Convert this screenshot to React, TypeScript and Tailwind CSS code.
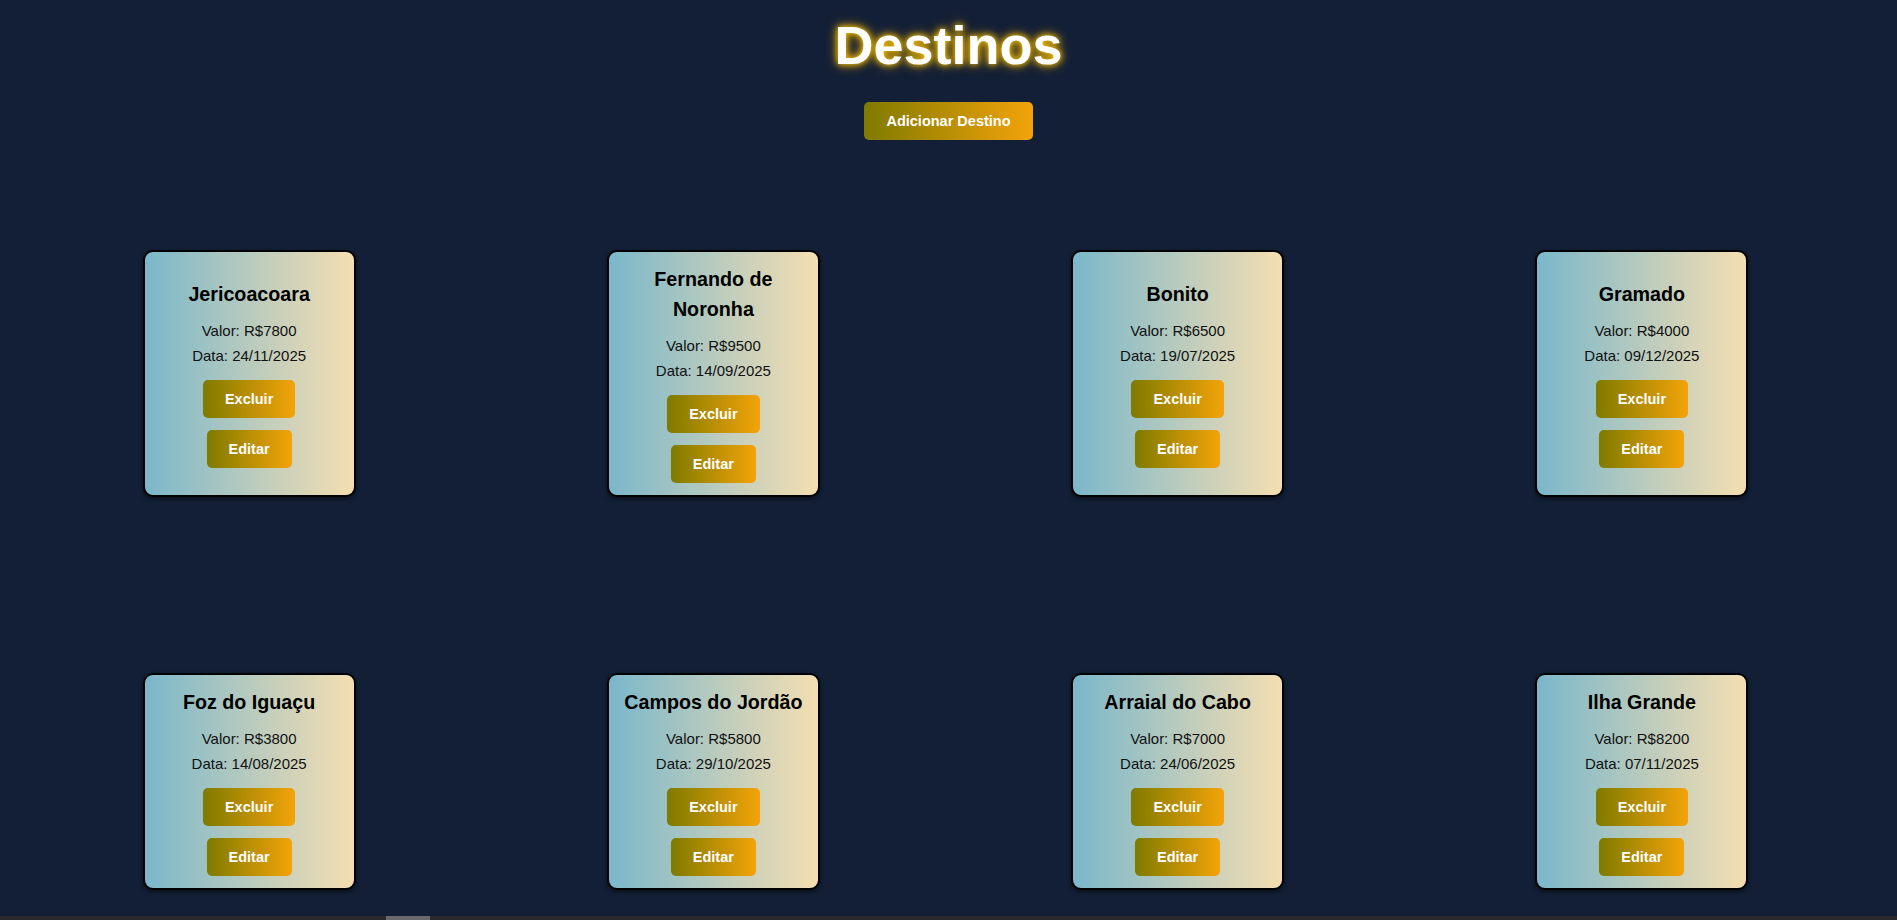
import React from "react";

type Destino = { nome: string; valor: number; data: string };

const destinos: Destino[] = [
  { nome: "Jericoacoara", valor: 7800, data: "24/11/2025" },
  { nome: "Fernando de Noronha", valor: 9500, data: "14/09/2025" },
  { nome: "Bonito", valor: 6500, data: "19/07/2025" },
  { nome: "Gramado", valor: 4000, data: "09/12/2025" },
  { nome: "Foz do Iguaçu", valor: 3800, data: "14/08/2025" },
  { nome: "Campos do Jordão", valor: 5800, data: "29/10/2025" },
  { nome: "Arraial do Cabo", valor: 7000, data: "24/06/2025" },
  { nome: "Ilha Grande", valor: 8200, data: "07/11/2025" },
];

function GoldButton({ children }: { children: React.ReactNode }) {
  return (
    <button className="rounded-[5px] bg-[linear-gradient(to_right,#7f7a00,#f3a30a)] px-[22px] py-[10px] text-[14.5px] font-bold leading-[18px] text-white">
      {children}
    </button>
  );
}

function Card({ d }: { d: Destino }) {
  return (
    <div className="flex w-[213px] flex-col items-center justify-center rounded-[10px] border-2 border-black bg-[linear-gradient(to_right,#7ab7cb,#f5deb1)] px-[10px] pb-[12px] pt-[12px] text-center shadow-[0_2px_4px_rgba(0,0,0,0.5)]">
      <h3 className="mb-[10px] text-[19.7px] font-bold leading-[30px] text-black">{d.nome}</h3>
      <p className="text-[15px] leading-[24.6px] text-[#111]">Valor: R${d.valor}</p>
      <p className="text-[15px] leading-[24.6px] text-[#111]">Data: {d.data}</p>
      <div className="mt-[12px] flex flex-col items-center gap-[12px]">
        <GoldButton>Excluir</GoldButton>
        <GoldButton>Editar</GoldButton>
      </div>
    </div>
  );
}

export default function App() {
  return (
    <div className="relative min-h-screen bg-[#131f36] pb-[32px] font-['Liberation_Sans',Arial,sans-serif]">
      <div className="flex flex-col items-center">
        <h1 className="mt-[15px] text-[54px] font-bold leading-[61px] text-white [text-shadow:0_0_6px_#ffcc00,0_0_12px_#e6a400]">
          Destinos
        </h1>
        <div className="mt-[26px]">
          <GoldButton>Adicionar Destino</GoldButton>
        </div>
      </div>
      <div className="mt-[110px] grid grid-cols-4 justify-items-center gap-y-[176px] pl-[17px] pr-[23px]">
        {destinos.map((d) => (
          <Card key={d.nome} d={d} />
        ))}
      </div>
      <div className="fixed bottom-0 left-0 right-0 h-[4px] bg-[#2a2a2c]">
        <div className="ml-[386px] h-full w-[44px] bg-[#6a6a6c]" />
      </div>
    </div>
  );
}
